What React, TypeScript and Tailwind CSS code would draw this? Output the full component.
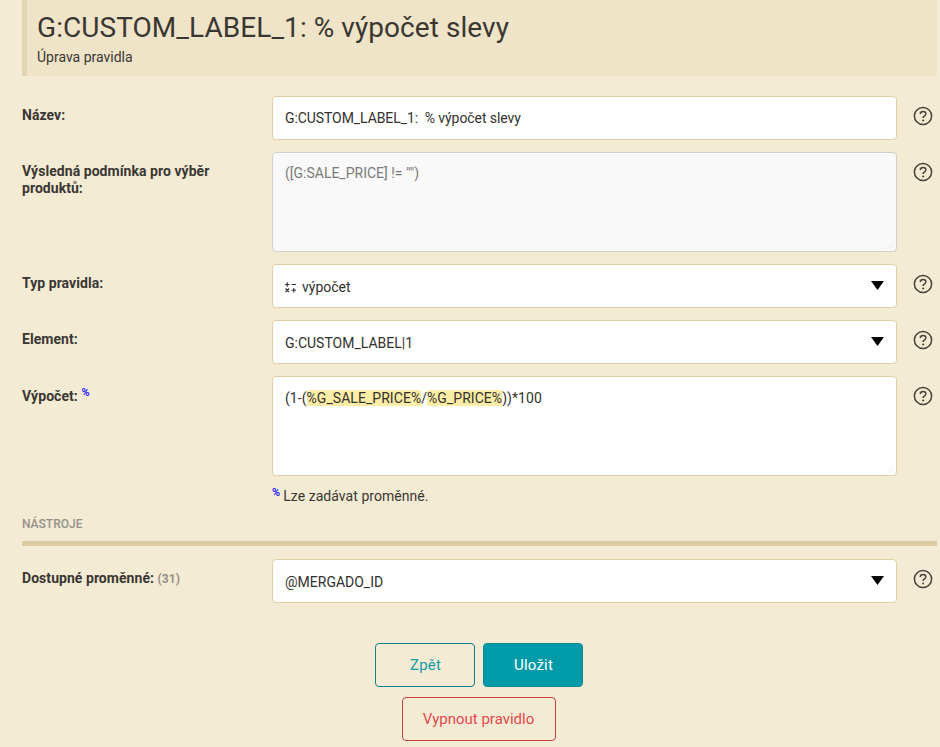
import React from 'react';

const FONT = "font-['Roboto',sans-serif]";

const HelpIcon: React.FC = () => (
  <svg width="20" height="20" viewBox="0 0 20 20" fill="none" className="block">
    <circle cx="10" cy="10" r="8.6" stroke="#47423a" strokeWidth="1.5" />
    <path d="M7.2 8c0-1.6 1.2-2.6 2.9-2.6 1.600 0 2.800 1 2.800 2.400 0 1.200-.7 1.800-1.600 2.400-.8.5-1.200 1-1.200 1.900" stroke="#47423a" strokeWidth="1.5" />
    <circle cx="10.1" cy="14.4" r="1" fill="#47423a" />
  </svg>
);

const Caret: React.FC = () => (
  <svg width="13" height="9" viewBox="0 0 13 9" className="absolute right-[12px] top-[16px]">
    <path d="M0 0h13L6.500 9z" fill="#000" />
  </svg>
);

const CalcIcon: React.FC = () => (
  <svg width="11" height="11" viewBox="0 0 11 11" fill="none" stroke="#2f2f2f" strokeWidth="1.1" className="mr-[6px] shrink-0">
    <path d="M0 2.500h4.500M2.250 .25v4.500M6.500 2.500h4.500M.5 6.500l3.500 3.500M4 6.500l-3.500 3.500M6.500 8.250h4.500M8.750 6v4.500" />
  </svg>
);

const Row: React.FC<{ label: React.ReactNode; children: React.ReactNode; cls?: string }> = ({ label, children, cls = '' }) => (
  <div className={`flex ${cls || 'mb-3'}`}>
    <div className="w-[250px] shrink-0 pr-4 pt-[11px] text-[14px] leading-[17px] font-bold tracking-[0.05px] text-[#3a3733]">{label}</div>
    <div className="w-[625px] shrink-0">{children}</div>
    <div className="ml-[16px] pt-[10px]"><HelpIcon /></div>
  </div>
);

const boxCls = 'relative bg-white border border-[#e0d0a6] rounded-[4px] px-3 text-[14px] text-[#33312e]';

const SelectBox: React.FC<{ children: React.ReactNode }> = ({ children }) => (
  <div className={`${boxCls} h-[44px] flex items-center pt-[2px]`}>
    {children}
    <Caret />
  </div>
);

const Percent: React.FC = () => (
  <span className="text-[11px] font-bold text-[#2a1fff] leading-none align-[5px]">%</span>
);

const Grip: React.FC<{ color: string }> = ({ color }) => (
  <svg width="10" height="10" viewBox="0 0 10 10" className="absolute right-[1px] bottom-[1px]">
    <path d="M9 1L1 9M9 5L5 9" stroke={color} strokeWidth="1" />
  </svg>
);

const App: React.FC = () => (
  <div className={`${FONT} h-[747px] overflow-hidden bg-[#f4ebd5] pl-[22px] pr-[3px]`}>
    <div className="h-[76px] bg-[#efe3c8] border-l-[5px] border-[#e2d5b2] pl-[10px] pt-[10px]">
      <h1 className="text-[28px] leading-[36px] font-normal tracking-[0.06px] text-[#3a3733]">G:CUSTOM_LABEL_1: % výpočet slevy</h1>
      <p className="text-[14px] leading-[18px] mt-[2px] text-[#3a3733]">Úprava pravidla</p>
    </div>

    <div className="mt-5">
      <Row label="Název:">
        <div className={`${boxCls} h-[44px] flex items-center whitespace-pre tracking-[-0.08px]`}>G:CUSTOM_LABEL_1:  % výpočet slevy</div>
      </Row>
      <Row label={<>Výsledná podmínka pro výběr<br />produktů:</>}>
        <div className="relative h-[100px] bg-[#f9f9f9] border border-[#d3d0c8] rounded-[4px] px-3 pt-[12px] text-[14px] leading-[17px] text-[#7b7a78]">
          ([G:SALE_PRICE] != "")
          <Grip color="#e8e8e8" />
        </div>
      </Row>
      <Row label="Typ pravidla:">
        <SelectBox><CalcIcon />výpočet</SelectBox>
      </Row>
      <Row label="Element:">
        <SelectBox>G:CUSTOM_LABEL|1</SelectBox>
      </Row>
      <Row label={<>Výpočet: <Percent /></>} cls="mb-0">
        <div className={`${boxCls} h-[100px] pt-[13px] leading-[17px] tracking-[0.05px]`}>
          (1-(<span className="bg-[#fbeda6]">%G_SALE_PRICE%</span>/<span className="bg-[#fbeda6]">%G_PRICE%</span>))*100
          <Grip color="#eeeeee" />
        </div>
      </Row>
      <div className="ml-[250px] mt-[10px] text-[14px] leading-[20px] tracking-[0.05px] text-[#3a3733]"><Percent /><span className="ml-[3px]">Lze zadávat proměnné.</span></div>
    </div>

    <div className="mt-[10px] text-[12px] leading-[16px] font-medium text-[#95918a] uppercase">Nástroje</div>
    <div className="h-[5px] mt-[9px] mb-[13px] bg-[#dccba0]" />

    <Row label={<>Dostupné proměnné: <span className="text-[12px] text-[#95918a]">(31)</span></>}>
      <SelectBox>@MERGADO_ID</SelectBox>
    </Row>

    <div className="mt-[40px] flex flex-col items-center gap-[10px] pr-[2px]">
      <div className="flex gap-2">
        <button className="w-[100px] h-[44px] rounded-[4px] border border-[#12808c] text-[15px] tracking-[0.2px] pl-[2px] text-[#129ca8]">Zpět</button>
        <button className="w-[100px] h-[44px] rounded-[4px] border border-[#0c8894] bg-[#009aa8] text-[15px] tracking-[0.2px] pl-[2px] text-white">Uložit</button>
      </div>
      <button className="w-[154px] h-[44px] rounded-[4px] border border-[#c84040] text-[15px] text-[#e8494c]">Vypnout pravidlo</button>
    </div>
  </div>
);

export default App;
